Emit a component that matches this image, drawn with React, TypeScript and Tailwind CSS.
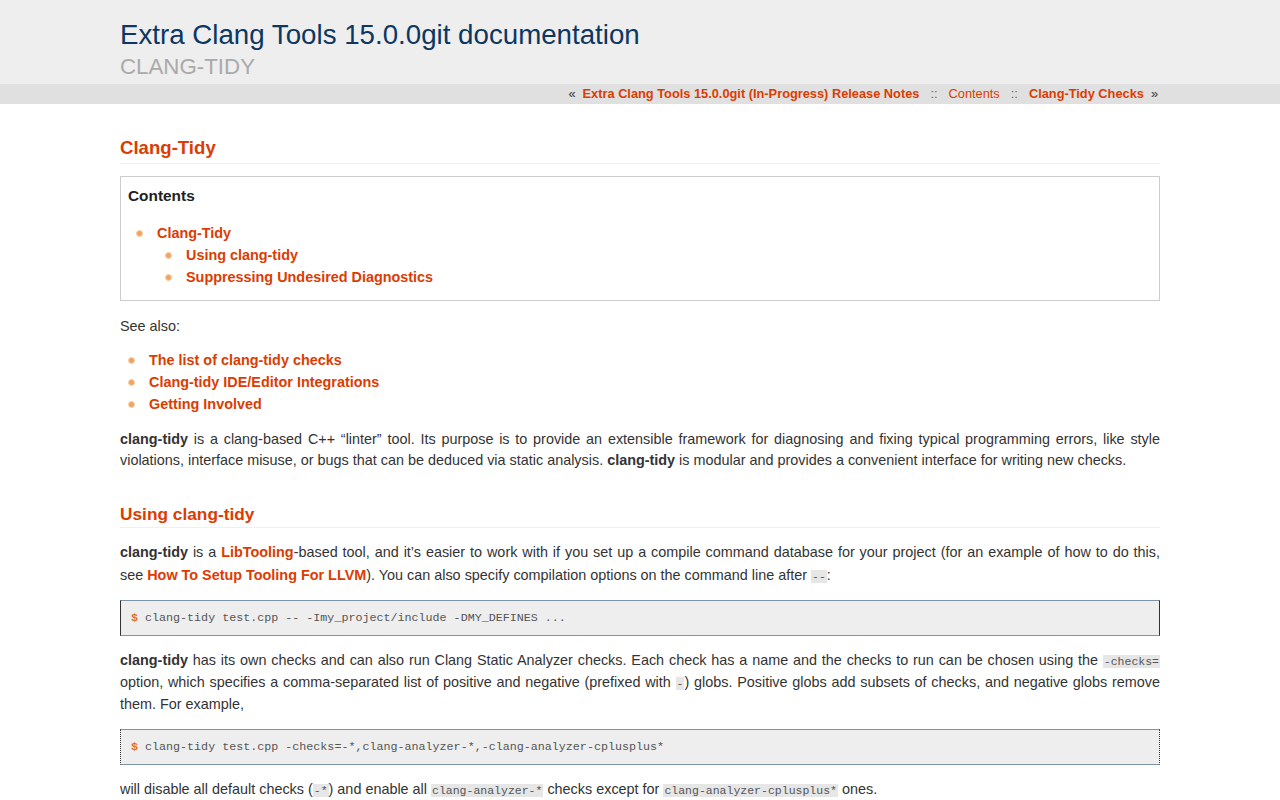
import React from "react";

const orange = "text-[#dc3c01]";

function Bullet() {
  return (
    <span className="absolute left-[-21px] top-[8px] w-[7px] h-[7px] rounded-full bg-[#f2a35e] border border-[#f9cfa6]" />
  );
}

function Li({ children, className = "" }: { children: React.ReactNode; className?: string }) {
  return (
    <li className={"relative " + className}>
      <Bullet />
      {children}
    </li>
  );
}

function A({ children, bold = true }: { children: React.ReactNode; bold?: boolean }) {
  return <a className={`${orange} ${bold ? "font-bold" : ""} no-underline`}>{children}</a>;
}

function Code({ children }: { children: React.ReactNode }) {
  return (
    <code className="bg-[#e6e6e6] text-[#555] text-[11.5px] leading-none px-[1px] font-['Liberation_Mono',monospace]">{children}</code>
  );
}

function Pre({ children, dotted }: { children: React.ReactNode; dotted?: boolean }) {
  return (
    <pre
      className="bg-[#eeeeee] border-y border-y-[#7f93a8] border-x border-x-[#333] h-[36px] pl-[10px] flex items-center text-[11.7px] text-[#555] font-['Liberation_Mono',monospace]"
      style={{ borderLeftStyle: dotted ? "dotted" : "solid", borderRightStyle: dotted ? "dotted" : "solid" }}
    >
      <span className="text-[#dc6e1c] font-bold mr-[7px]">$</span>
      {children}
    </pre>
  );
}

export default function App() {
  return (
    <div className="min-h-[800px] bg-white font-['Liberation_Sans',Arial,sans-serif] text-[#333] text-[14.4px] leading-[22px]">
      <header className="bg-[#eeeeee] h-[84px]">
        <div className="w-[1040px] mx-auto pt-[18px]">
          <div className="text-[27.7px] leading-[34px] text-[#0c3762]">Extra Clang Tools 15.0.0git documentation</div>
          <div className="text-[22.3px] leading-[26px] text-[#aaaaaa] mt-[2px]">CLANG-TIDY</div>
        </div>
      </header>
      <nav className="bg-[#e0e0e0] h-[20px]">
        <div className="w-[1040px] mx-auto flex justify-end items-center h-full text-[12.8px] text-[#333]">
          <span className="mr-[7px]">«</span>
          <A>Extra Clang Tools 15.0.0git (In-Progress) Release Notes</A>
          <span className="mx-[11px] text-[#666]">::</span>
          <A bold={false}>Contents</A>
          <span className="mx-[11px] text-[#666]">::</span>
          <A>Clang-Tidy Checks</A>
          <span className="ml-[7px] mr-[2px]">»</span>
        </div>
      </nav>
      <main className="w-[1040px] mx-auto pt-[32px]">
        <h2 className={`text-[18.6px] leading-[24px] font-bold ${orange} border-b border-[#f0f0f0] pb-[3px]`}>Clang-Tidy</h2>
        <div className="mt-[12px] border border-[#cccccc] px-[7px] pt-[8px] pb-[12px]">
          <div className="font-bold text-[15.4px] leading-[22px] text-[#222]">Contents</div>
          <ul className="mt-[15px] pl-[29px]">
            <Li>
              <A>Clang-Tidy</A>
              <ul className="pl-[29px]">
                <Li><A>Using clang-tidy</A></Li>
                <Li><A>Suppressing Undesired Diagnostics</A></Li>
              </ul>
            </Li>
          </ul>
        </div>
        <p className="mt-[14px]">See also:</p>
        <ul className="mt-[12px] pl-[29px]">
          <Li><A>The list of clang-tidy checks</A></Li>
          <Li><A>Clang-tidy IDE/Editor Integrations</A></Li>
          <Li><A>Getting Involved</A></Li>
        </ul>
        <p className="mt-[14px] text-justify leading-[21px]">
          <b>clang-tidy</b> is a clang-based C++ “linter” tool. Its purpose is to provide an extensible framework for diagnosing and fixing typical programming errors, like style violations, interface misuse, or bugs that can be deduced via static analysis. <b>clang-tidy</b> is modular and provides a convenient interface for writing new checks.
        </p>
        <h2 className={`mt-[31px] text-[17.3px] leading-[24px] font-bold ${orange} border-b border-[#f0f0f0] pb-[1px]`}>Using clang-tidy</h2>
        <p className="mt-[13px] text-justify leading-[23px]">
          <b>clang-tidy</b> is a <A>LibTooling</A>-based tool, and it’s easier to work with if you set up a compile command database for your project (for an example of how to do this, see <A>How To Setup Tooling For LLVM</A>). You can also specify compilation options on the command line after <Code>--</Code>:
        </p>
        <div className="mt-[13px]">
          <Pre>clang-tidy test.cpp -- -Imy_project/include -DMY_DEFINES ...</Pre>
        </div>
        <p className="mt-[13px] text-justify">
          <b>clang-tidy</b> has its own checks and can also run Clang Static Analyzer checks. Each check has a name and the checks to run can be chosen using the <Code>-checks=</Code> option, which specifies a comma-separated list of positive and negative (prefixed with <Code>-</Code>) globs. Positive globs add subsets of checks, and negative globs remove them. For example,
        </p>
        <div className="mt-[14px]">
          <Pre dotted>clang-tidy test.cpp -checks=-*,clang-analyzer-*,-clang-analyzer-cplusplus*</Pre>
        </div>
        <p className="mt-[13px]">
          will disable all default checks (<Code>-*</Code>) and enable all <Code>clang-analyzer-*</Code> checks except for <Code>clang-analyzer-cplusplus*</Code> ones.
        </p>
      </main>
    </div>
  );
}
